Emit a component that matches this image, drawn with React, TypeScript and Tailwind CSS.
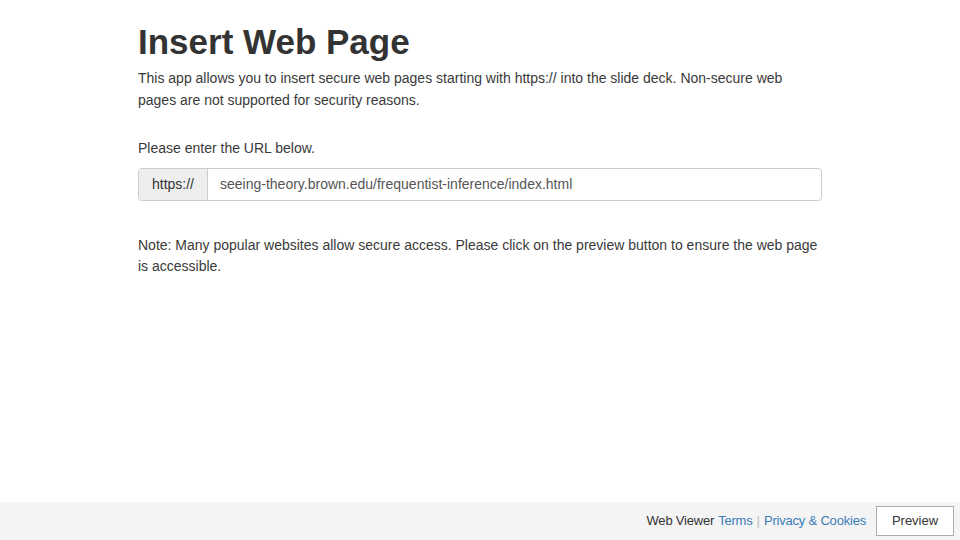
export default function App() {
  return (
    <div
      className="h-[540px] w-[960px] flex flex-col bg-white text-[#333]"
      style={{ fontFamily: '"Liberation Sans", Arial, sans-serif' }}
    >
      <main className="flex-1">
        <div className="w-[684px] mx-auto pt-[22px]">
          <h1 className="text-[35px] leading-[40px] font-bold text-[#333]">
            Insert Web Page
          </h1>
          <p className="mt-[5px] text-[14px] leading-[22px] text-[#3a3a3a]">
            This app allows you to insert secure web pages starting with https:// into the slide deck. Non-secure web
            pages are not supported for security reasons.
          </p>
          <p className="mt-[26px] text-[14px] leading-[22px] text-[#3a3a3a]">Please enter the URL below.</p>
          <div className="mt-[9px] flex h-[33px] w-full rounded-[4px] border border-[#ccc] overflow-hidden text-[14px]">
            <div className="w-[69px] flex items-center justify-center bg-[#eee] border-r border-[#ccc]">https://</div>
            <div className="flex-1 flex items-center pl-[12px] text-[#555]">
              seeing-theory.brown.edu/frequentist-inference/index.html
            </div>
          </div>
          <p className="mt-[34px] text-[14px] leading-[21px] text-[#3a3a3a]">
            Note: Many popular websites allow secure access. Please click on the preview button to ensure the web page
            is accessible.
          </p>
        </div>
      </main>
      <footer className="h-[38px] bg-[#f4f4f4] flex items-center justify-end pr-[6px] text-[13px]">
        <span className="text-[#333] tracking-[-0.2px]">Web Viewer</span>
        <span className="ml-[4px] text-[#3a7cb8] tracking-[-0.2px]">Terms</span>
        <span className="mx-[4px] text-[#bbb]">|</span>
        <span className="text-[#3a7cb8] tracking-[-0.2px]">Privacy &amp; Cookies</span>
        <button className="ml-[10px] w-[78px] h-[30px] bg-white border border-[#adadad] text-[13px] text-[#333]">
          Preview
        </button>
      </footer>
    </div>
  );
}
